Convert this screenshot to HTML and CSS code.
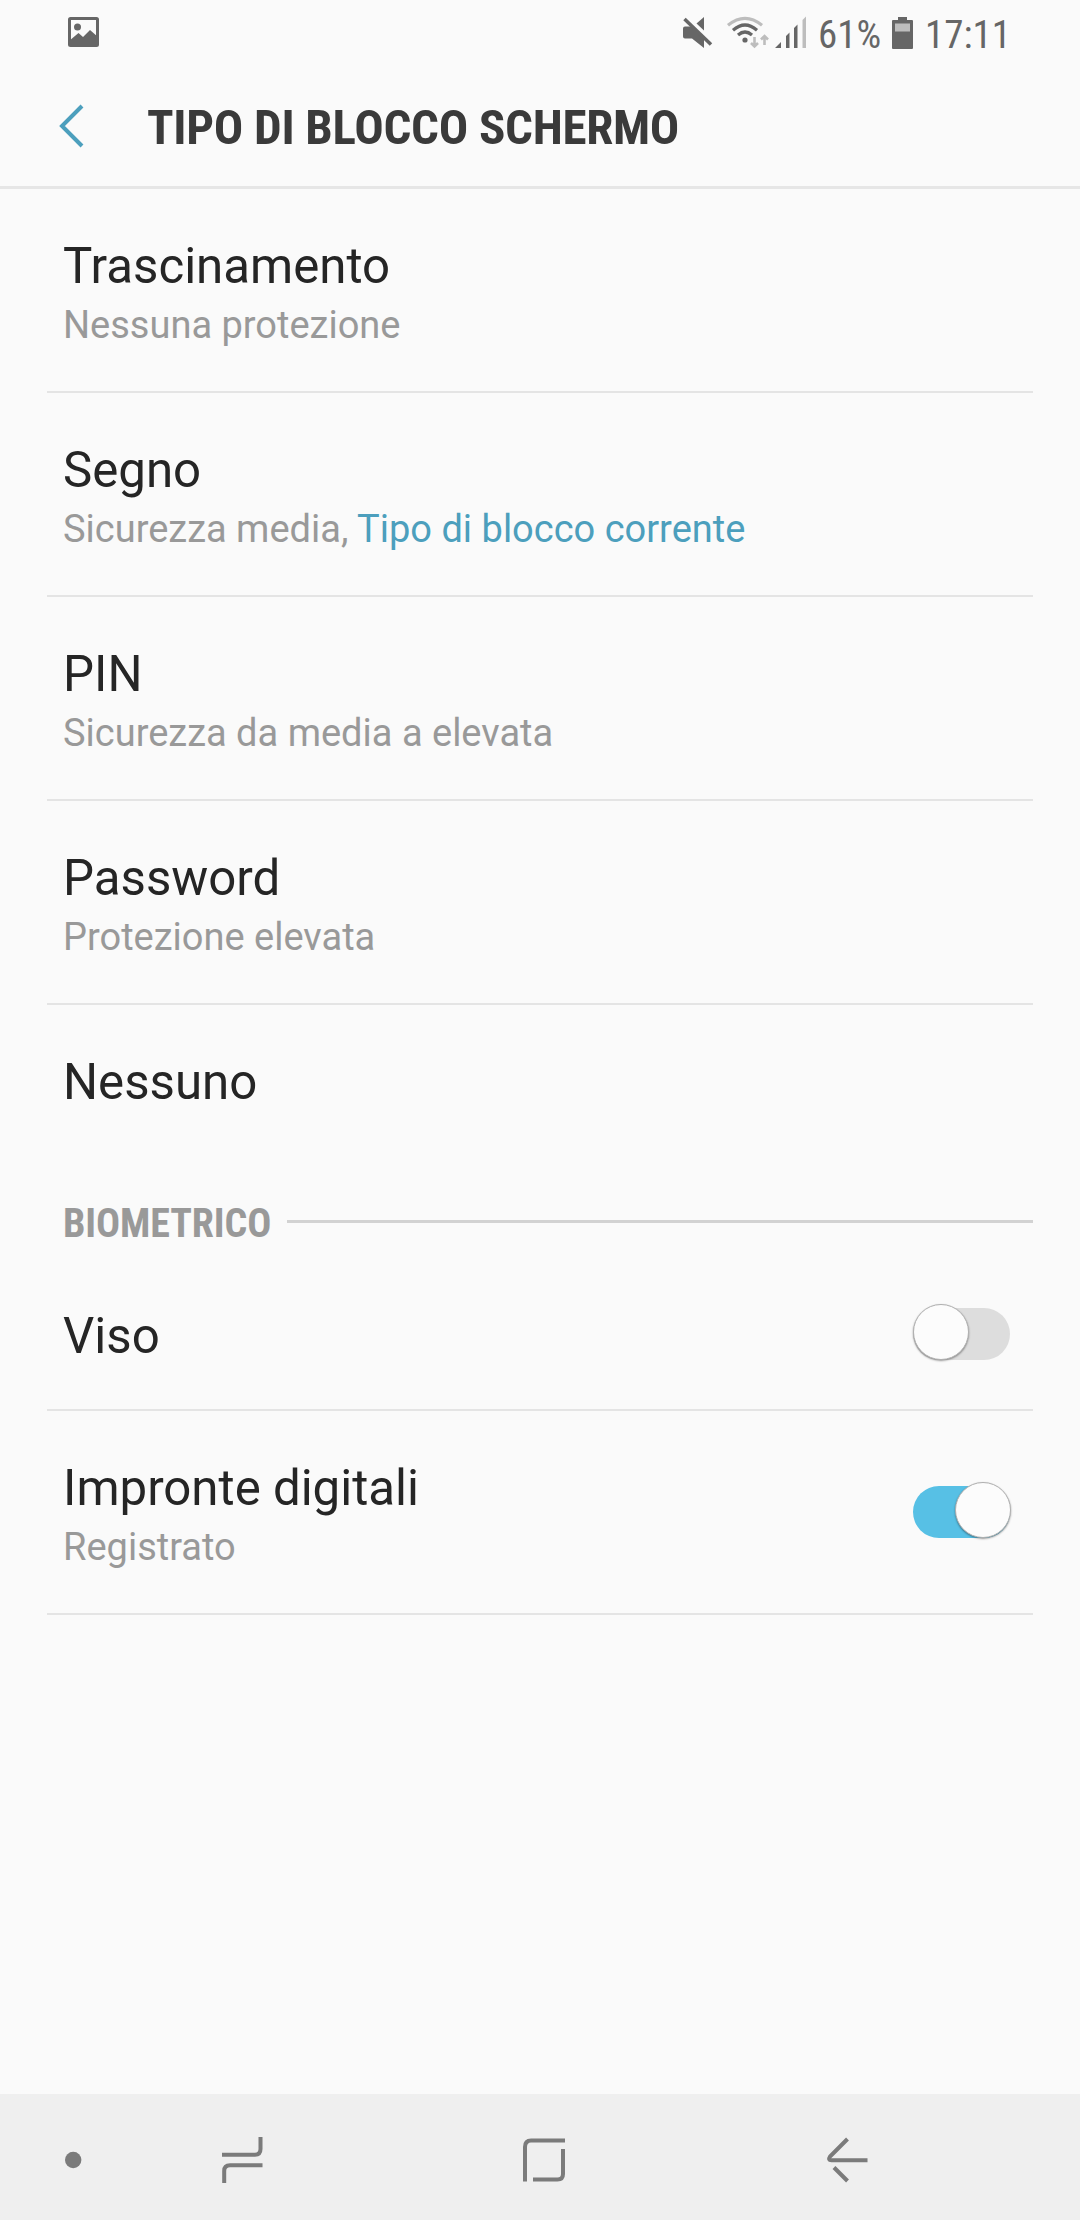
FILE: index.html
```html
<!DOCTYPE html>
<html lang="it">
<head>
    <meta charset="UTF-8">
    <meta name="viewport" content="width=device-width, initial-scale=1.0">
    <title>Tipo di blocco schermo</title>
    <link rel="stylesheet" href="styles.css">
</head>
<body>
    <div class="statusbar">
        <svg class="icon-picture" width="32" height="30" viewBox="0 0 32 30">
            <rect x="1.5" y="1.5" width="28" height="27" rx="1" fill="none" stroke="#666" stroke-width="3"/>
            <circle cx="9.5" cy="10" r="3.5" fill="#666"/>
            <path d="M1 24 L10.5 16 L15 20 L22 13 L30 20 V28 H1 Z" fill="#666"/>
        </svg>
        <svg class="icon-status" width="146" height="40" viewBox="680 10 146 40">
            <!-- mute -->
            <path d="M685 26.500 H692 L704 38 V48 L692 38.500 H685 Q683 38.500 683 36.500 V28.500 Q683 26.500 685 26.500 Z" fill="#666"/>
            <path d="M696.500 23.500 L704 17 V30.500 Z" fill="#666"/>
            <path d="M684.500 19 L711 44.500" stroke="#666" stroke-width="3.500"/>
            <!-- wifi -->
            <path d="M728 25.300 Q745 11.500 762 25.300" fill="none" stroke="#bdbdbd" stroke-width="3.200"/>
            <path d="M733 30.200 Q745 19.800 757 30.200" fill="none" stroke="#666" stroke-width="3.200"/>
            <path d="M738 35 Q745 29 752 35" fill="none" stroke="#666" stroke-width="3.200"/>
            <circle cx="745" cy="40" r="2.600" fill="#666"/>
            <path d="M754.500 37 V46 M751 43 L754.500 46.500 L758 43 M764.500 45 V36 M761 39.500 L764.500 36 L768 39.500" fill="none" stroke="#bdbdbd" stroke-width="2.600"/>
            <!-- signal -->
            <path d="M775 48 L781 42 V48 Z M786 36 L789.500 32.500 V48 H786 Z M794 28 L797.500 24.500 V48 H794 Z" fill="#666"/>
            <path d="M802.500 20 L806 16.500 V48 H802.500 Z" fill="#bdbdbd"/>
        </svg>
        <span class="battery">61%</span>
        <svg class="icon-battery" width="21" height="32" viewBox="0 0 21 32">
            <path d="M6 0 H15 V3 H20 Q21 3 21 4 V31 Q21 32 20 32 H1 Q0 32 0 31 V4 Q0 3 1 3 H6 Z" fill="#666"/>
            <rect x="3" y="6.500" width="15" height="8" fill="#bdbdbd"/>
        </svg>
        <span class="clock">17:11</span>
    </div>

    <header class="header">
        <svg width="26" height="44" viewBox="0 0 26 44">
            <path d="M23 2 L3 22 L23 42" fill="none" stroke="#4c9fbd" stroke-width="4"/>
        </svg>
        <h1>TIPO DI BLOCCO SCHERMO</h1>
    </header>

    <main class="list">
        <div class="row">
            <div>
                <div class="title">Trascinamento</div>
                <div class="sub">Nessuna protezione</div>
            </div>
        </div>
        <div class="row">
            <div>
                <div class="title">Segno</div>
                <div class="sub">Sicurezza media, <span class="current">Tipo di blocco corrente</span></div>
            </div>
        </div>
        <div class="row">
            <div>
                <div class="title">PIN</div>
                <div class="sub">Sicurezza da media a elevata</div>
            </div>
        </div>
        <div class="row">
            <div>
                <div class="title">Password</div>
                <div class="sub">Protezione elevata</div>
            </div>
        </div>
        <div class="row last">
            <div class="title">Nessuno</div>
        </div>

        <div class="section">
            <h2>BIOMETRICO</h2>
            <div class="line"></div>
        </div>

        <div class="row small">
            <div class="title">Viso</div>
            <div class="switch"><div class="thumb"></div></div>
        </div>
        <div class="row">
            <div>
                <div class="title">Impronte digitali</div>
                <div class="sub">Registrato</div>
            </div>
            <div class="switch on"><div class="thumb"></div></div>
        </div>
    </main>

    <nav class="navbar">
        <svg width="1080" height="126" viewBox="0 2094 1080 126" fill="none" stroke="#7b7b7b" stroke-width="4">
            <circle cx="73.200" cy="2160" r="8.200" fill="#7b7b7b" stroke="none"/>
            <!-- recents -->
            <path d="M222 2154.700 H255 Q260.500 2154.700 260.500 2149 V2137"/>
            <path d="M262.500 2165.300 H230 Q224.200 2165.300 224.200 2171 V2183"/>
            <!-- home -->
            <path d="M525 2181.500 V2147 Q525 2140.500 531 2140.500 H565"/>
            <path d="M563 2149 V2174 Q563 2179.500 557.500 2179.500 H533"/>
            <!-- back -->
            <path d="M847.500 2139 L830 2156.500 Q827.500 2160.200 831.500 2160.200 H867.500"/>
            <path d="M834 2167.500 L847.500 2181"/>
        </svg>
    </nav>
</body>
</html>
```

FILE: styles.css
```css
* {
    box-sizing: border-box;
}
body {
    display: flex;
    flex-direction: column;
    width: 1080px;
    height: 2220px;
    margin: 0;
    background-color: #fafafa;
    font-family: Roboto, sans-serif;
    color: #252525;
}
svg {
    display: block;
    flex: none;
}

/* Status bar */
.statusbar {
    display: flex;
    height: 68px;
    padding: 0 72px 0 68px;
    color: #666;
    font-size: 39px;
    font-stretch: 75%;
    line-height: 46px;
    white-space: nowrap;
}
.icon-picture {
    margin-top: 17px;
}
.icon-status {
    margin: 10px -8px 0 auto;
}
.battery, .clock {
    padding-top: 12px;
}
.battery {
    width: 74px;
}
.icon-battery {
    margin: 17px 12px 0 0;
}
.clock {
    width: 83px;
}

/* Header */
.header {
    display: flex;
    align-items: center;
    height: 121px;
    padding: 0 0 3px 59px;
    border-bottom: 3px solid #e6e6e6;
}
.header h1 {
    margin: 4px 0 0 62px;
    color: #3a3a3a;
    font-size: 49px;
    font-stretch: 75%;
    letter-spacing: -0.3px;
    line-height: 58px;
}

/* List */
.list {
    flex: 1;
    padding: 0 47px;
}
.row {
    display: flex;
    justify-content: space-between;
    height: 204px;
    padding: 48px 23px 0 16px;
    border-bottom: 2px solid #e4e4e4;
}
.row.last {
    height: 152px;
    border: none;
}
.row.small {
    height: 150px;
    padding-top: 46px;
}
.title {
    font-size: 49.2px;
    line-height: 58px;
}
.sub {
    margin-top: 8px;
    color: #999;
    font-size: 38px;
    line-height: 44px;
}
.current {
    color: #4c9fbd;
}
.section {
    display: flex;
    height: 104px;
    padding: 42px 0 0 16px;
}
.section h2 {
    width: 224px;
    margin: 1px 0 0;
    color: #999;
    font-size: 40px;
    font-stretch: 75%;
    letter-spacing: -0.1px;
    line-height: 48px;
}
.section .line {
    flex: 1;
    height: 3px;
    margin-top: 21px;
    background-color: #d2d2d2;
}

/* Switch */
.switch {
    width: 97px;
    height: 52px;
    margin-top: 1px;
    border-radius: 26px;
    background-color: #ddd;
}
.thumb {
    width: 56px;
    height: 56px;
    margin-top: -4px;
    border: 1px solid #b0b0b0;
    border-radius: 50%;
    background-color: #fcfcfc;
    box-shadow: 0 1px 2px rgba(0, 0, 0, 0.4);
}
.switch.on {
    margin-top: 27px;
    background-color: #57c0e5;
}
.switch.on .thumb {
    margin-left: 42px;
}

/* Navigation bar */
.navbar {
    height: 126px;
    background-color: #efefef;
}
```
